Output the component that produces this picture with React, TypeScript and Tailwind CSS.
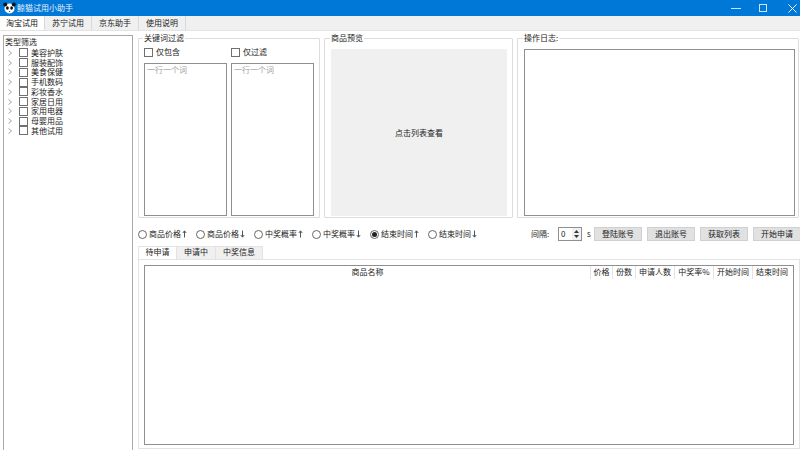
import * as React from "react";

const FONT = "[font-family:'Noto_Sans_CJK_SC','Liberation_Sans',sans-serif]";

const CATEGORIES = ["美容护肤", "服装配饰", "美食保健", "手机数码", "彩妆香水", "家居日用", "家用电器", "母婴用品", "其他试用"];
const SORTS = [
  { label: "商品价格", up: true },
  { label: "商品价格", up: false },
  { label: "中奖概率", up: true },
  { label: "中奖概率", up: false },
  { label: "结束时间", up: true, checked: true },
  { label: "结束时间", up: false },
];
const ACTIONS = ["登陆账号", "退出账号", "获取列表", "开始申请"];
const COLUMNS = [
  { label: "价格", w: "w-[22px]" },
  { label: "份数", w: "w-[23px]" },
  { label: "申请人数", w: "w-[39px]" },
  { label: "中奖率%", w: "w-[39px]" },
  { label: "开始时间", w: "w-[39px]" },
  { label: "结束时间", w: "w-[39px]" },
];

function PandaIcon() {
  return (
    <svg width="13" height="12" viewBox="0 0 13 12" className="shrink-0">
      <circle cx="6.5" cy="6.5" r="5" fill="#fff" />
      <circle cx="2.2" cy="2.4" r="2" fill="#111" />
      <circle cx="10.8" cy="2.4" r="2" fill="#111" />
      <ellipse cx="4.4" cy="6" rx="1.4" ry="1.7" fill="#111" />
      <ellipse cx="8.6" cy="6" rx="1.4" ry="1.7" fill="#111" />
      <path d="M5.6 9 h1.8 l-.9 1 z" fill="#111" />
    </svg>
  );
}

function Checkbox() {
  return <span className="block w-[7px] h-[7px] shrink-0 box-content border border-[#707070] bg-white" />;
}

function Group({ title, className, children }: { title: string; className: string; children: React.ReactNode }) {
  return (
    <fieldset className={`border border-[#dcdcdc] rounded-[1px] min-w-0 ${className}`}>
      <legend className="ml-[-1px] px-[1px] text-[8px] leading-[10px] text-[#222]">{title}</legend>
      {children}
    </fieldset>
  );
}

function KeywordColumn({ label }: { label: string }) {
  return (
    <div className="w-[83px] flex flex-col">
      <label className="h-[15px] pt-[3px] flex items-center gap-[3px] text-[8px] text-[#222]">
        <Checkbox />
        {label}
      </label>
      <div className="h-[153px] mt-[5px] border border-[#8f8f8f] bg-white px-[2px] text-[8px] leading-[11px] text-[#a0a0a0]">
        一行一个词
      </div>
    </div>
  );
}

function Arrow({ up }: { up: boolean }) {
  return (
    <svg width="5" height="8" viewBox="0 0 5 8" className="ml-px">
      <path d={up ? "M2.5 7.5V1M.8 3 2.5 .8 4.2 3" : "M2.5 .5V7M.8 5 2.5 7.2 4.2 5"} fill="none" stroke="#555" strokeWidth="1" />
    </svg>
  );
}

function TopTab({ label, active, w }: { label: string; active?: boolean; w: string }) {
  return (
    <div
      className={`${w} h-full flex items-center justify-center text-[8px] border-r border-[#d9d9d9] ${
        active ? "bg-white text-[#111]" : "bg-[#f0f0f0] text-[#222]"
      }`}
    >
      {label}
    </div>
  );
}

export default function App() {
  return (
    <div className={`w-[800px] h-[450px] overflow-hidden bg-white flex flex-col ${FONT}`}>
      <header className="h-4 shrink-0 bg-[#0078d7] flex items-center pl-[3px] text-white">
        <PandaIcon />
        <span className="ml-[1px] text-[8px] text-[#e8f2fb]">鲸猫试用小助手</span>
        <div className="ml-auto flex items-center text-white">
          <svg width="10" height="10" viewBox="0 0 10 10" className="mr-[18px]">
            <path d="M0 5.5H10" stroke="#cfe4f7" strokeWidth="1" />
          </svg>
          <svg width="8" height="8" viewBox="0 0 8 8" className="mr-[21px]">
            <rect x=".5" y=".5" width="7" height="7" fill="none" stroke="#cfe4f7" strokeWidth="1" />
          </svg>
          <svg width="9" height="9" viewBox="0 0 9 9" className="mr-[3px]">
            <path d="M.5 .5 8.5 8.5M8.5 .5 .5 8.5" stroke="#fff" strokeWidth="1" />
          </svg>
        </div>
      </header>

      <nav className="h-[15px] shrink-0 bg-[#f0f0f0] flex border-b border-[#e3e3e3]">
        <TopTab label="淘宝试用" active w="w-[45px]" />
        <TopTab label="苏宁试用" w="w-[47px]" />
        <TopTab label="京东助手" w="w-[47px]" />
        <TopTab label="使用说明" w="w-[47px]" />
      </nav>

      <main className="flex-1 min-h-0 flex">
        <aside className="w-[130px] ml-[3px] mt-1 mr-[5px] shrink-0 border-x border-t border-[#a8a8a8] px-[1px] pt-[1px] text-[8px] text-[#222]">
          <div className="leading-[10px]">类型筛选</div>
          <ul className="mt-[1px]">
            {CATEGORIES.map((c) => (
              <li key={c} className="h-[9.75px] flex items-center">
                <svg width="4" height="6" viewBox="0 0 4 6" className="ml-[3px] mr-[7px]">
                  <path d="M.5 .5 3.5 3 .5 5.5" fill="none" stroke="#a6a6a6" strokeWidth="1" />
                </svg>
                <Checkbox />
                <span className="ml-[3px] leading-none">{c}</span>
              </li>
            ))}
          </ul>
        </aside>

        <div className="flex-1 min-w-0 flex flex-col">
          <div className="flex gap-1 h-[191px] pt-[2px]">
            <Group title="关键词过滤" className="w-[182px] h-[185px] pl-[5px] shrink-0">
              <div className="flex gap-1">
                <KeywordColumn label="仅包含" />
                <KeywordColumn label="仅过滤" />
              </div>
            </Group>
            <Group title="商品预览" className="w-[189px] h-[185px] pl-[6px] pr-[5px] pt-[6px] shrink-0">
              <div className="h-[167px] bg-[#f0f0f0] flex items-center justify-center text-[8px] text-[#222]">
                点击列表查看
              </div>
            </Group>
            <Group title="操作日志:" className="w-[282px] h-[185px] pl-[6px] pr-[3px] pt-[6px] shrink-0">
              <div className="h-[167px] border border-[#8f8f8f] bg-white" />
            </Group>
          </div>

          <div className="h-[14px] mt-[5px] flex items-center text-[8px] text-[#222]">
            {SORTS.map((s, i) => (
              <label key={i} className="w-[58px] flex items-center shrink-0">
                <span className="w-[7px] h-[7px] rounded-full border border-[#666] bg-white flex items-center justify-center box-content">
                  {s.checked && <span className="w-[5px] h-[5px] rounded-full bg-[#222]" />}
                </span>
                <span className="ml-[2px]">{s.label}</span>
                <Arrow up={s.up} />
              </label>
            ))}
            <span className="ml-[45px] w-[27px] shrink-0">间隔:</span>
            <div className="w-6 h-[14px] shrink-0 border border-[#8f8f8f] flex items-stretch bg-white">
              <span className="flex-1 pl-[2px] leading-[12px]">0</span>
              <div className="w-[9px] flex flex-col items-center justify-center gap-[2px] bg-[#f0f0f0]">
                <svg width="5" height="3" viewBox="0 0 5 3"><path d="M0 3 2.5 0 5 3z" fill="#333" /></svg>
                <svg width="5" height="3" viewBox="0 0 5 3"><path d="M0 0 2.5 3 5 0z" fill="#333" /></svg>
              </div>
            </div>
            <span className="ml-[5px] w-[7px] shrink-0">s</span>
            <div className="flex gap-[5px] shrink-0">
              {ACTIONS.map((a) => (
                <button key={a} className="w-12 h-[14px] bg-[#e1e1e1] border border-[#d0d0d0] text-[8px] leading-none text-[#222]">
                  {a}
                </button>
              ))}
            </div>
          </div>

          <div className="flex h-[13px] mt-[5px] text-[8px] leading-none text-[#222]">
            <div className="w-[39px] pb-[2px] flex items-center justify-center bg-white border-x border-t border-[#e3e3e3]">待申请</div>
            <div className="w-[39px] pb-[2px] flex items-center justify-center bg-[#f0f0f0] border-r border-t border-[#e3e3e3]">申请中</div>
            <div className="w-[47px] pb-[2px] flex items-center justify-center bg-[#f0f0f0] border-r border-t border-[#e3e3e3]">中奖信息</div>
          </div>
          <div className="h-[190px] border border-[#e3e3e3] px-[5px] pt-[5px]">
            <div className="w-[650px] h-[180px] border border-[#8f8f8f] bg-white">
              <div className="h-[13px] pr-[2px] flex text-[8px] text-[#222] leading-[11px]">
                <div className="flex-1 text-center">商品名称</div>
                {COLUMNS.map((c) => (
                  <div key={c.label} className={`${c.w} shrink-0 border-l border-[#e3e3e3] text-center`}>
                    {c.label}
                  </div>
                ))}
              </div>
            </div>
          </div>
        </div>
      </main>
    </div>
  );
}
